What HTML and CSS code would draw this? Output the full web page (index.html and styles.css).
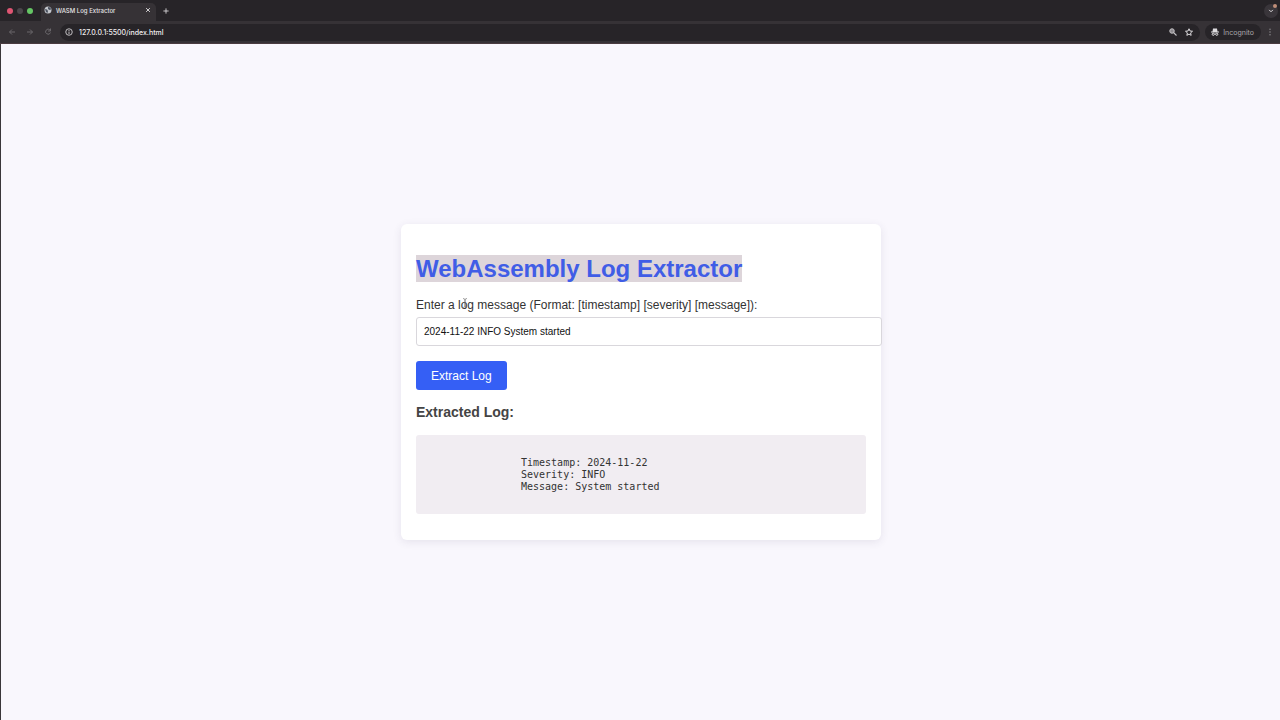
FILE: index.html
```
<!DOCTYPE html>
<html lang="en">
<head>
<meta charset="utf-8">
<title>WASM Log Extractor</title>
<link rel="stylesheet" href="styles.css">
</head>
<body>
<header class="browser">
  <div class="tabstrip">
    <div class="lights"><span class="light red"></span><span class="light gray"></span><span class="light green"></span></div>
    <div class="tab">
      <svg class="icon" viewBox="0 0 16 16"><circle cx="8" cy="8" r="7" fill="#c3c6cc"/><path d="M2 6l4 1 2 3-1 4-3-2zM8 2l5 1 1 4-3 1-3-2z" fill="#4b5260"/></svg>
      <span class="tab-title">WASM Log Extractor</span>
      <button class="icon-button" aria-label="Close tab"><svg class="icon small" viewBox="0 0 16 16"><path d="M3 3l10 10M13 3L3 13" stroke="#e2e0e2" stroke-width="2.4"/></svg></button>
    </div>
    <button class="icon-button new-tab" aria-label="New tab"><svg class="icon small" viewBox="0 0 16 16"><path d="M8 1v14M1 8h14" stroke="#d8d6d8" stroke-width="2.4"/></svg></button>
    <button class="icon-button tab-search" aria-label="Search tabs"><svg class="icon small" viewBox="0 0 16 16"><path d="M3 5l5 5 5-5" fill="none" stroke="#e2e0e2" stroke-width="2.6"/></svg><span class="notice"></span></button>
  </div>
  <div class="toolbar">
    <nav class="nav">
      <button class="icon-button" aria-label="Back"><svg class="icon" viewBox="0 0 16 16"><path d="M14 8H3M8 3L3 8l5 5" fill="none" stroke="#6a676b" stroke-width="2"/></svg></button>
      <button class="icon-button" aria-label="Forward"><svg class="icon" viewBox="0 0 16 16"><path d="M2 8h11M8 3l5 5-5 5" fill="none" stroke="#6a676b" stroke-width="2"/></svg></button>
      <button class="icon-button" aria-label="Reload"><svg class="icon" viewBox="0 0 16 16"><path d="M13 9a5 5 0 1 1-1-5l1 2M13 1v5H8" fill="none" stroke="#6a676b" stroke-width="2"/></svg></button>
    </nav>
    <div class="address">
      <svg class="icon" viewBox="0 0 16 16"><circle cx="8" cy="8" r="6.5" fill="none" stroke="#d0ced0" stroke-width="1.8"/><path d="M8 7v5M8 4v2" stroke="#d0ced0" stroke-width="1.8"/></svg>
      <input class="url" aria-label="Address" value="127.0.0.1:5500/index.html">
      <button class="icon-button" aria-label="Zoom"><svg class="icon" viewBox="0 0 16 16"><circle cx="6" cy="6" r="4.5" fill="#8c898d" stroke="#c3c1c4" stroke-width="2"/><path d="M9 9l6 6" stroke="#c3c1c4" stroke-width="2.2"/></svg></button>
      <button class="icon-button" aria-label="Bookmark"><svg class="icon" viewBox="0 0 16 16"><path d="M8 1.5l2 4.500 5 .5-3.800 3.300 1.100 4.900L8 12.200l-4.300 2.500 1.100-4.900L1 6.500 6 6z" fill="none" stroke="#dedcdf" stroke-width="2"/></svg></button>
    </div>
    <div class="incognito">
      <svg class="icon" viewBox="0 0 16 16"><path d="M4 1h8l1 6h3v2H0V7h3z" fill="#dedcdf"/><path d="M7 12h2" stroke="#dedcdf" stroke-width="1.6"/><circle cx="4.5" cy="12.5" r="2.2" fill="none" stroke="#dedcdf" stroke-width="2"/><circle cx="11.5" cy="12.5" r="2.2" fill="none" stroke="#dedcdf" stroke-width="2"/></svg>
      <span>Incognito</span>
    </div>
    <button class="icon-button" aria-label="Menu"><svg class="icon" viewBox="0 0 16 16"><g fill="#8b888c"><circle cx="8" cy="2.5" r="1.5"/><circle cx="8" cy="8" r="1.5"/><circle cx="8" cy="13.5" r="1.5"/></g></svg></button>
  </div>
</header>
<main class="page">
  <section class="card">
    <h1 class="title"><span class="selected">WebAssembly Log Extractor</span></h1>
    <label class="label" for="log">Enter a log message (Format: [timestamp] [severity] [message]):</label>
    <input class="log-input" id="log" type="text" value="2024-11-22 INFO System started">
    <button class="extract">Extract Log</button>
    <h2 class="subtitle">Extracted Log:</h2>
    <pre class="output">Timestamp: 2024-11-22
Severity: INFO
Message: System started</pre>
    <svg class="cursor" viewBox="0 0 6 10"><path d="M1 .5q2 0 2 1.5v6q0 1.5-2 1.5M5 .5q-2 0-2 1.5v6q0 1.5 2 1.5" fill="none" stroke="#666" stroke-width=".6"/></svg>
  </section>
</main>
</body>
</html>
```
FILE: styles.css
```
body {
  margin: 0;
  min-height: 100vh;
  display: flex;
  flex-direction: column;
  background: #f9f7fd;
  color: #333;
  font-family: "Liberation Sans", Arial, sans-serif;
}
button, input { font-family: inherit; }
.browser {
  background: #363236;
  color: #e6e4e6;
  font-family: Inter, "Liberation Sans", sans-serif;
  border-bottom: 1px solid #4a3b40;
}
.icon { display: block; width: 8px; height: 8px; flex: none; }
.small { width: 6px; height: 6px; }
.icon-button { display: block; padding: 0; border: 0; background: none; }
.tabstrip { display: flex; align-items: center; height: 21px; background: #272428; }
.lights { display: flex; gap: 4px; padding: 0 8px 0 7px; }
.light { width: 6px; height: 6px; border-radius: 50%; }
.red { background: #df5573; }
.gray { background: #4b474c; }
.green { background: #65c665; }
.tab {
  display: flex;
  align-items: center;
  gap: 4px;
  box-sizing: border-box;
  width: 115px;
  height: 18px;
  margin-top: 3px;
  padding: 0 5px 4px 3px;
  border-radius: 5px 5px 0 0;
  background: #363236;
}
.tab-title { flex: 1; font-size: 6px; font-weight: 500; white-space: nowrap; }
.new-tab { margin-left: 7px; }
.tab-search {
  position: relative;
  margin-left: auto;
  margin-right: 2px;
  padding: 4px;
  border-radius: 50%;
  background: #39353a;
}
.notice {
  position: absolute;
  top: 0;
  right: 1px;
  width: 4px;
  height: 4px;
  border-radius: 50%;
  background: #bf8d78;
}
.toolbar { display: flex; align-items: center; gap: 5px; height: 22px; padding: 0 6px 0 8px; }
.nav { display: flex; gap: 10px; padding-right: 3px; }
.address {
  display: flex;
  flex: 1;
  align-items: center;
  gap: 8px;
  height: 17px;
  padding: 0 7px 0 5px;
  border-radius: 9px;
  background: #272428;
}
.url {
  flex: 1;
  min-width: 0;
  padding: 0;
  margin-left: -2px;
  border: 0;
  background: none;
  color: #efedef;
  font-size: 7px;
  font-weight: 500;
}
.incognito {
  display: flex;
  align-items: center;
  gap: 4px;
  height: 16px;
  padding: 0 7px 0 6px;
  border-radius: 8px;
  background: #272428;
  color: #a9a6aa;
  font-size: 7px;
}
.page {
  flex: 1;
  display: flex;
  align-items: center;
  justify-content: center;
  padding-left: 1px;
  border-left: 1px solid #3a363a;
}
.card {
  position: relative;
  box-sizing: border-box;
  width: 480px;
  padding: 31px 15px 26px;
  border-radius: 6px;
  background: #fff;
  box-shadow: 0 2px 8px rgba(60, 50, 90, 0.1);
}
.title { margin: 0 0 14px; font-size: 24px; line-height: 28px; color: #405de6; }
.selected { background: #ddd5da; }
.label { display: block; margin-bottom: 4px; font-size: 12px; line-height: 16px; }
.log-input {
  display: block;
  box-sizing: content-box;
  width: 100%;
  height: 27px;
  padding: 0 7px;
  border: 1px solid #d9d7dc;
  border-radius: 3px;
  background: #fff;
  color: #111;
  font-size: 10px;
}
.extract {
  display: block;
  height: 29px;
  margin: 15px 0 13px;
  padding: 0 15px;
  border: 0;
  border-radius: 3px;
  background: #355ff5;
  color: #fff;
  font-size: 12px;
}
.subtitle { margin: 0 0 14px; font-size: 14px; line-height: 18px; color: #444; }
.output {
  margin: 0;
  padding: 22px 105px 21px;
  border-radius: 3px;
  background: #f1edf2;
  font-family: "DejaVu Sans Mono", monospace;
  font-size: 10px;
  line-height: 12px;
}
.cursor { position: absolute; left: 61px; top: 74px; width: 6px; height: 10px; }
```
